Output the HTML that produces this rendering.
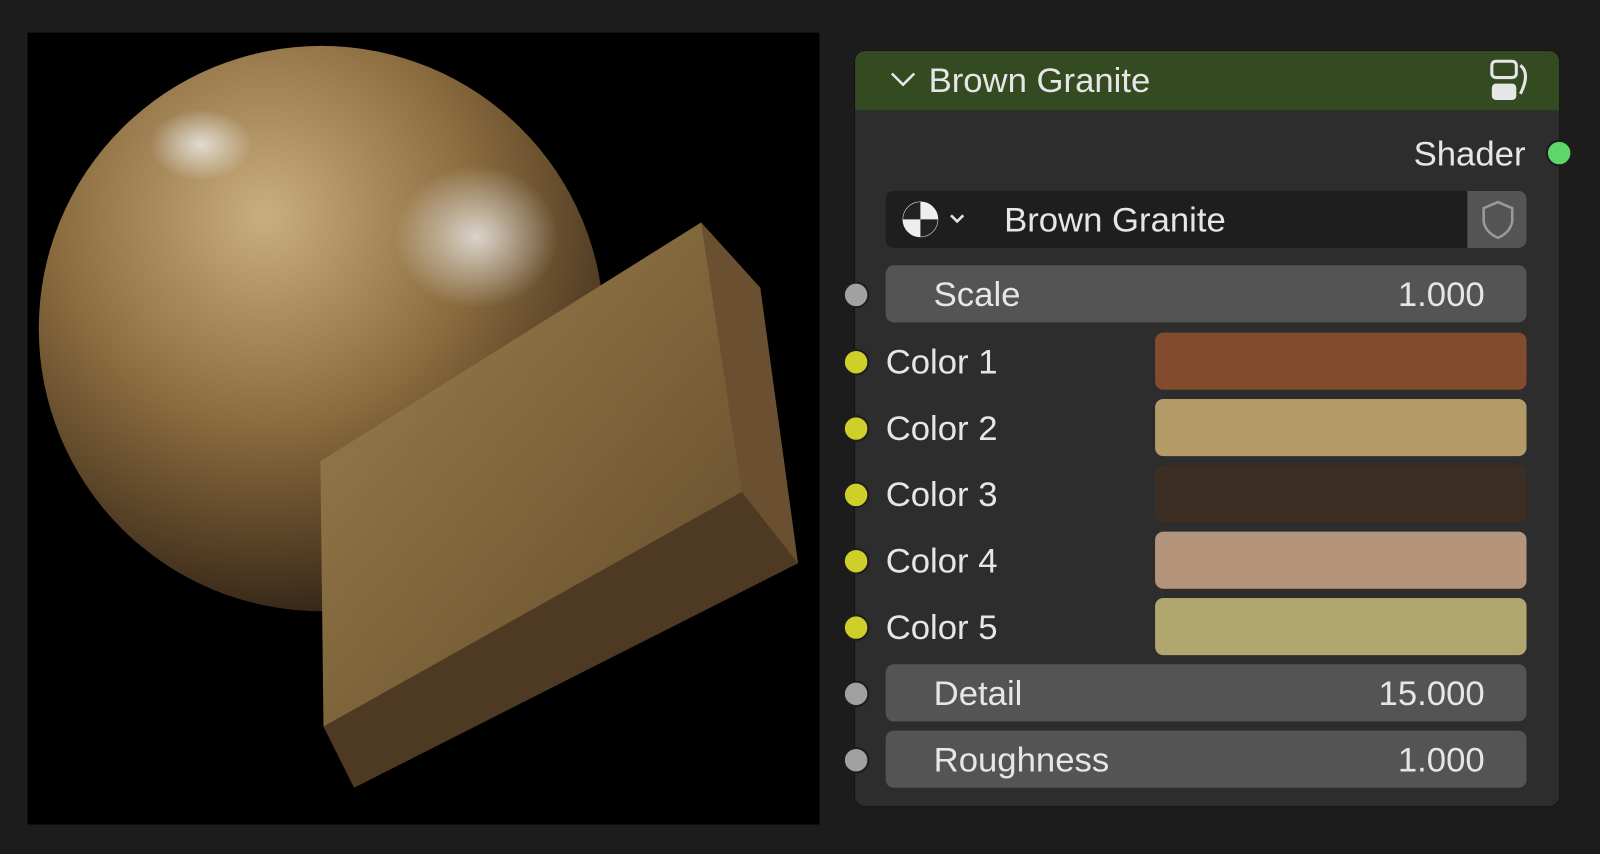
<!DOCTYPE html><html><head><style>
body{margin:0;width:1600px;height:854px;background:#1c1c1c;font-family:"Liberation Sans",sans-serif;color:#e6e6e6;position:relative;overflow:hidden}
#w{position:absolute;left:0;top:0;width:1568px;height:837px;transform:scale(1.0204);transform-origin:0 0}
.a{position:absolute}
.img{left:27px;top:32px;width:776px;height:776px;background:#000;overflow:hidden}
.panel{left:838px;top:50px;width:690px;height:740px;background:#2d2d2d;border-radius:10px;overflow:hidden;box-shadow:0 0 0 1px #141414}
.hdr{left:0;top:0;width:690px;height:58px;background:#344a21}
.t{font-size:34px;line-height:36px}
.sock{width:22px;height:22px;border-radius:50%;border:2px solid #1d1d1d}
.fld{left:30px;width:628px;height:56px;background:#545454;border-radius:8px}
.sw{left:294px;width:364px;height:56px;border-radius:8px}
</style></head><body><div id="w">
<div class="a img">
<svg width="776" height="776">
<defs>
<radialGradient id="sp" cx="0.4" cy="0.3" r="0.75">
<stop offset="0" stop-color="#c9ae7e"/><stop offset="0.5" stop-color="#8a6b3e"/><stop offset="0.85" stop-color="#4a3620"/><stop offset="1" stop-color="#2a1e12"/></radialGradient>
<linearGradient id="bx" x1="0" y1="0" x2="1" y2="1"><stop offset="0" stop-color="#9a8050"/><stop offset="0.5" stop-color="#7c6238"/><stop offset="1" stop-color="#5a4428"/></linearGradient>
<radialGradient id="hl" cx="0.5" cy="0.5" r="0.5"><stop offset="0" stop-color="#eee" stop-opacity="0.8"/><stop offset="1" stop-color="#eee" stop-opacity="0"/></radialGradient>
</defs>
<circle cx="288" cy="290" r="277" fill="url(#sp)"/>
<ellipse cx="440" cy="200" rx="80" ry="70" fill="url(#hl)"/>
<ellipse cx="170" cy="110" rx="50" ry="35" fill="url(#hl)"/>
<polygon points="287,420 660,186 718,250 755,520 320,735 290,680" fill="url(#bx)"/>
<polygon points="660,186 718,250 755,520 700,450" fill="#6a5030"/>
<polygon points="290,680 700,450 755,520 320,740" fill="#4e3a22"/>
</svg></div>
<div class="a panel">
<div class="a hdr"></div>
<svg class="a" style="left:34px;top:18px" width="26" height="20"><path d="M2 4 L13 15 L24 4" stroke="#e6e6e6" stroke-width="2.5" fill="none"/></svg>
<div class="a t" style="left:72px;top:11px">Brown Granite</div>
<svg class="a" style="left:620px;top:8px" width="46" height="42"><rect x="4" y="2" width="24" height="16" rx="4" fill="none" stroke="#e6e6e6" stroke-width="3"/><rect x="4" y="24" width="24" height="16" rx="4" fill="#e6e6e6"/><path d="M32 6 q10 8 0 28" stroke="#e6e6e6" stroke-width="3" fill="none"/></svg>
<div class="a t" style="right:33px;top:83px">Shader</div>
<div class="a" style="left:30px;top:137px;width:628px;height:56px;background:#1e1e1e;border-radius:8px;overflow:hidden">
<div class="a" style="left:570px;top:0;width:58px;height:56px;background:#545454"></div>
<svg class="a" style="left:582px;top:8px" width="36" height="40"><path d="M18 3 L32 9 V22 Q30 33 18 38 Q6 33 4 22 V9 Z" fill="none" stroke="#9a9a9a" stroke-width="2.5"/></svg>
<svg class="a" style="left:12px;top:8px" width="70" height="40"><circle cx="22" cy="20" r="17" fill="#eee" stroke="#eee"/><path d="M22 20 H39 A17 17 0 0 1 22 37 Z M22 20 H5 A17 17 0 0 1 22 3 Z" fill="#222"/><path d="M52 16 l6 6 l6-6" stroke="#e6e6e6" stroke-width="2.5" fill="none"/></svg>
<div class="a t" style="left:116px;top:11px">Brown Granite</div>
</div>
<div class="a fld" style="top:210px"></div><div class="a t" style="left:77px;top:221px">Scale</div><div class="a t" style="right:73px;top:221px">1.000</div>
<div class="a sw" style="top:276px;background:#824b2e"></div>
<div class="a sw" style="top:341px;background:#b39a67"></div>
<div class="a sw" style="top:406px;background:#3d2e24"></div>
<div class="a sw" style="top:471px;background:#b4957b"></div>
<div class="a sw" style="top:536px;background:#b1a76e"></div>
<div class="a t" style="left:30px;top:287px">Color 1</div>
<div class="a t" style="left:30px;top:352px">Color 2</div>
<div class="a t" style="left:30px;top:417px">Color 3</div>
<div class="a t" style="left:30px;top:482px">Color 4</div>
<div class="a t" style="left:30px;top:547px">Color 5</div>
<div class="a fld" style="top:601px"></div><div class="a t" style="left:77px;top:612px">Detail</div><div class="a t" style="right:73px;top:612px">15.000</div>
<div class="a fld" style="top:666px"></div><div class="a t" style="left:77px;top:677px">Roughness</div><div class="a t" style="right:73px;top:677px">1.000</div>
</div>
<div class="a sock" style="left:1515px;top:137px;background:#5fd66a"></div>
<div class="a sock" style="left:826px;top:276px;background:#a1a1a1"></div>
<div class="a sock" style="left:826px;top:342px;background:#cfcf2a"></div>
<div class="a sock" style="left:826px;top:407px;background:#cfcf2a"></div>
<div class="a sock" style="left:826px;top:472px;background:#cfcf2a"></div>
<div class="a sock" style="left:826px;top:537px;background:#cfcf2a"></div>
<div class="a sock" style="left:826px;top:602px;background:#cfcf2a"></div>
<div class="a sock" style="left:826px;top:667px;background:#a1a1a1"></div>
<div class="a sock" style="left:826px;top:732px;background:#a1a1a1"></div>
</div></body></html>
